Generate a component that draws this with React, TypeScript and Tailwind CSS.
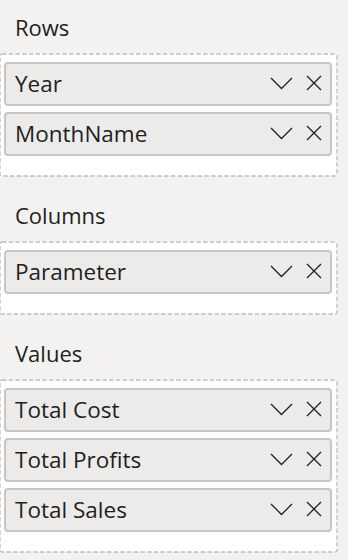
const fields = [
  { label: "Rows", items: ["Year", "MonthName"] },
  { label: "Columns", items: ["Parameter"] },
  { label: "Values", items: ["Total Cost", "Total Profits", "Total Sales"] },
];

const Chevron = () => (
  <svg width="23" height="13" viewBox="0 0 23 13" fill="none">
    <path d="M1 1 L11.5 11.5 L22 1" stroke="#201f1e" strokeWidth="1.3" />
  </svg>
);

const Close = () => (
  <svg width="16" height="16" viewBox="0 0 16 16" fill="none">
    <path d="M1 1 L15 15 M15 1 L1 15" stroke="#201f1e" strokeWidth="1.3" />
  </svg>
);

const FieldPill = ({ name }: { name: string }) => (
  <div className="h-[44px] flex items-center border-2 border-[#c8c6c4] rounded-[4px] bg-[#edebe9] pl-[9px] pr-[8px]">
    <span className="flex-1 text-[22.5px] leading-[28px] text-[#201f1e] whitespace-nowrap">{name}</span>
    <div className="flex items-center gap-[13px] mt-[-2px]">
      <Chevron />
      <Close />
    </div>
  </div>
);

const App = () => {
  return (
    <div
      className="w-[348px] h-[560px] bg-[#f3f2f1] overflow-hidden"
      style={{ fontFamily: '"Open Sans", "Noto Sans", sans-serif' }}
    >
      {fields.map((f, i) => (
        <div key={f.label} className={i === 0 ? "" : "mt-3"}>
          {/* ----label---- */}
          <div className="h-[53px] pt-[16px] pl-[15px] text-[22px] leading-[22px] text-[#201f1e]">
            {f.label}
          </div>
          {/* ----well---- */}
          <div className="relative ml-[-1px] w-[338px] bg-white rounded-[2px] p-px">
            <svg className="absolute top-[0.5px] left-[0.5px] w-[337px] h-[calc(100%-1px)] overflow-visible pointer-events-none">
              <rect
                width="100%"
                height="100%"
                rx="2"
                fill="none"
                stroke="#bdbdbd"
                strokeWidth="1.3"
                strokeDasharray="4.5 2.2"
              />
            </svg>
            <div className="pt-2 pb-[19px] px-1 flex flex-col gap-[6px]">
              {f.items.map((it) => (
                <FieldPill key={it} name={it} />
              ))}
            </div>
          </div>
        </div>
      ))}
    </div>
  );
};

export default App;
